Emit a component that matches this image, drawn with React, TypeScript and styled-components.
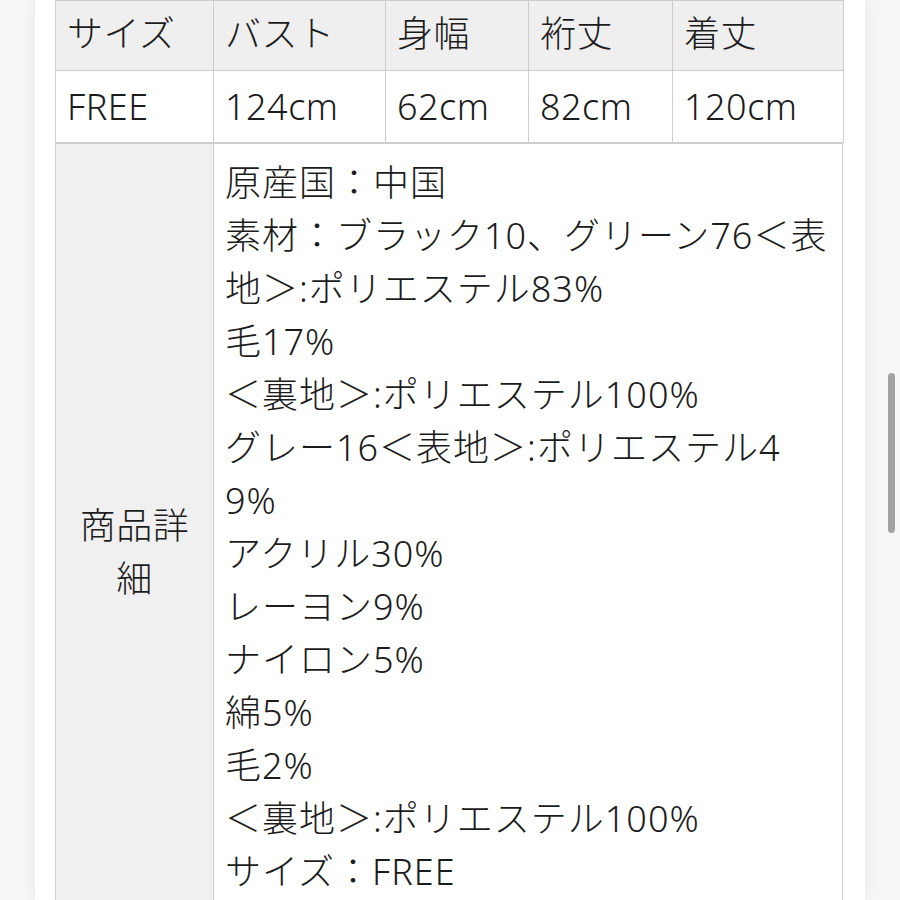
import React from 'react';
import styled, { createGlobalStyle } from 'styled-components';

const GlobalStyle = createGlobalStyle`
  html, body {
    margin: 0;
    padding: 0;
    height: 900px;
    overflow: hidden;
    background: #f6f6f6;
    font-family: "Noto Sans", "Noto Sans CJK JP", sans-serif;
    color: #1c1c1c;
  }
`;

const sizeHeaders = ['サイズ', 'バスト', '身幅', '裄丈', '着丈'];
const sizeValues = ['FREE', '124cm', '62cm', '82cm', '120cm'];
const columnWidths = [158, 172, 143, 144, 171];

const detailLines = [
  '原産国：中国',
  '素材：ブラック10、グリーン76＜表',
  '地＞:ポリエステル83%',
  '毛17%',
  '＜裏地＞:ポリエステル100%',
  'グレー16＜表地＞:ポリエステル4',
  '9%',
  'アクリル30%',
  'レーヨン9%',
  'ナイロン5%',
  '綿5%',
  '毛2%',
  '＜裏地＞:ポリエステル100%',
  'サイズ：FREE',
];

const Page = styled.div`
  width: 830px;
  height: 900px;
  margin-left: 35px;
  background: #ffffff;
  box-shadow: 0 0 14px rgba(0, 0, 0, 0.06);
  padding-left: 20px;
  box-sizing: border-box;
`;

const Table = styled.table`
  width: 788px;
  border-collapse: collapse;
  table-layout: fixed;
  font-size: 36px;
  font-weight: 300;
  letter-spacing: 0.5px;
`;

const Cell = styled.td<{ $head?: boolean; $height: number }>`
  height: ${({ $height }) => $height}px;
  padding: ${({ $head }) => ($head ? '0 10px 8px 11px' : '0 10px 0 11px')};
  border: 1px solid #cdcdcd;
  background: ${({ $head }) => ($head ? '#efefef' : '#ffffff')};
  white-space: nowrap;
  vertical-align: middle;
  box-sizing: border-box;
`;

const LabelCell = styled.td`
  width: 158px;
  padding: 0 14px;
  border: 1px solid #cdcdcd;
  background: #f0f0f0;
  text-align: center;
  vertical-align: middle;
  line-height: 53px;
  box-sizing: border-box;
`;

const DetailCell = styled.td`
  padding: 12px 10px 62px 11px;
  border: 1px solid #cdcdcd;
  background: #ffffff;
  vertical-align: top;
  letter-spacing: 1px;
`;

const DetailLine = styled.div`
  line-height: 53px;
  white-space: nowrap;
`;

const ScrollThumb = styled.div`
  position: fixed;
  left: 888px;
  top: 373px;
  width: 7px;
  height: 160px;
  border-radius: 4px;
  background: #a3a3a3;
`;

const App: React.FC = () => {
  return (
    <>
      <GlobalStyle />
      <Page>
        <Table>
          <colgroup>
            {columnWidths.map((w, i) => (
              <col key={i} style={{ width: w }} />
            ))}
          </colgroup>
          <tbody>
            <tr>
              {sizeHeaders.map((h) => (
                <Cell key={h} $head $height={70}>
                  {h}
                </Cell>
              ))}
            </tr>
            <tr>
              {sizeValues.map((v) => (
                <Cell key={v} $height={72}>
                  {v}
                </Cell>
              ))}
            </tr>
          </tbody>
        </Table>
        <Table>
          <colgroup>
            <col style={{ width: 158 }} />
            <col />
          </colgroup>
          <tbody>
            <tr>
              <LabelCell>商品詳細</LabelCell>
              <DetailCell>
                {detailLines.map((line, i) => (
                  <DetailLine key={i}>{line}</DetailLine>
                ))}
              </DetailCell>
            </tr>
          </tbody>
        </Table>
      </Page>
      <ScrollThumb />
    </>
  );
};

export default App;
